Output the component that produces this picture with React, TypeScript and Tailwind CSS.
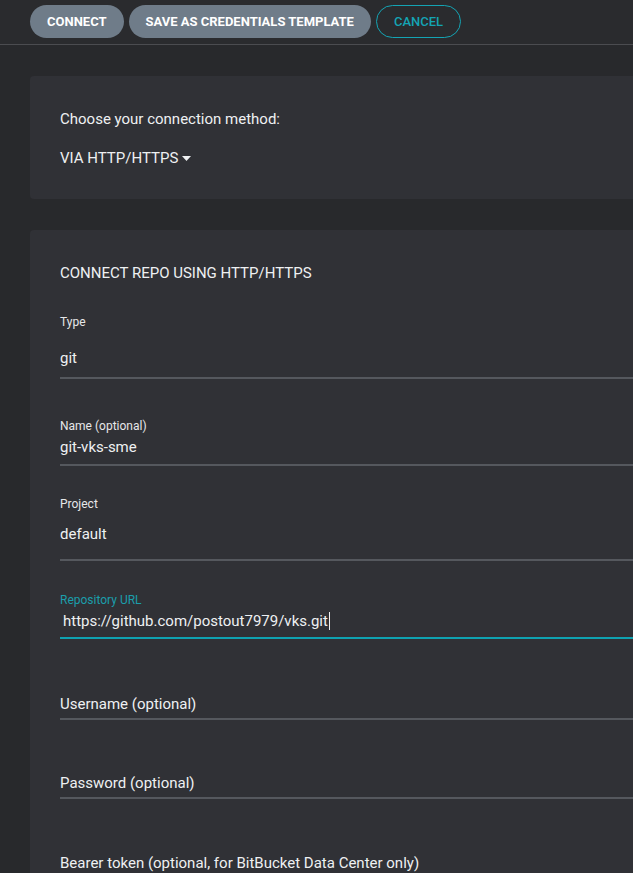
import { ReactNode } from "react";

const font = { fontFamily: "Roboto, 'Noto Sans', sans-serif" };

function Line({ active = false, className = "" }: { active?: boolean; className?: string }) {
  return (
    <div
      className={`h-[2px] w-full ${active ? "bg-[#0fa2b1]" : "bg-[#55585e]"} ${className}`}
    />
  );
}

function Label({ children, active = false }: { children: ReactNode; active?: boolean }) {
  return (
    <div
      className={`text-[12px] leading-4 ${active ? "text-[#1b9eab]" : "text-[#e6e7e9]"}`}
    >
      {children}
    </div>
  );
}

function Value({ children, className = "" }: { children: ReactNode; className?: string }) {
  return (
    <div className={`text-[15px] leading-5 text-[#eef0f2] ${className}`}>{children}</div>
  );
}

export default function App() {
  return (
    <div
      className="min-h-screen w-full overflow-hidden bg-[#28292c] text-[#eef0f2]"
      style={font}
    >
      {/* toolbar */}
      <div className="flex h-[45px] items-start gap-[5px] border-b border-[#4b4c50] bg-[#2a2b2e] pl-[30px] pt-[5px]">
        <button className="h-[33px] rounded-full bg-[#6f7c89] px-[17px] text-[13px] font-bold text-white">
          CONNECT
        </button>
        <button className="h-[33px] rounded-full bg-[#6f7c89] px-[17px] text-[13px] font-bold text-white">
          SAVE AS CREDENTIALS TEMPLATE
        </button>
        <button className="h-[33px] rounded-full border border-[#14a4b4] px-[17px] text-[13px] font-medium text-[#14a4b4]">
          CANCEL
        </button>
      </div>

      <div className="ml-[30px] mr-[-20px] pt-[31px]">
        {/* method card */}
        <div className="h-[123px] rounded-[4px] bg-[#303136] pl-[30px] pt-[33px]">
          <div className="text-[15px] leading-5">Choose your connection method:</div>
          <div className="mt-[19px] flex items-center gap-[4px] text-[15px] leading-5">
            VIA HTTP/HTTPS
            <svg width="9" height="5" viewBox="0 0 9 5" className="mt-[1px]">
              <path d="M0 0 L9 0 L4.5 5 Z" fill="#eef0f2" />
            </svg>
          </div>
        </div>

        {/* repo form card */}
        <div className="mt-[31px] min-h-[700px] rounded-[4px] bg-[#303136] pl-[30px] pt-[33px]">
          <div className="text-[15px] leading-5">CONNECT REPO USING HTTP/HTTPS</div>

          {/* Type */}
          <div className="mt-[31px]">
            <Label>Type</Label>
            <Value className="mt-[18px]">git</Value>
            <Line className="mt-[9px]" />
          </div>

          {/* Name */}
          <div className="mt-[39px]">
            <Label>Name (optional)</Label>
            <Value className="mt-[3px]">git-vks-sme</Value>
            <Line className="mt-[7px]" />
          </div>

          {/* Project */}
          <div className="mt-[30px]">
            <Label>Project</Label>
            <Value className="mt-[12px]">default</Value>
            <Line className="mt-[15px]" />
          </div>

          {/* Repository URL */}
          <div className="mt-[31px]">
            <Label active>Repository URL</Label>
            <Value className="mt-[3px] flex items-center pl-[3px]">
              https://github.com/postout7979/vks.git
              <span className="ml-[1px] inline-block h-[18px] w-[1px] bg-[#eef0f2]" />
            </Value>
            <Line active className="mt-[6px]" />
          </div>

          {/* Username */}
          <div className="mt-[55px]">
            <Value className="text-[#e3e5e8]">Username (optional)</Value>
            <Line className="mt-[4px]" />
          </div>

          {/* Password */}
          <div className="mt-[53px]">
            <Value className="text-[#e3e5e8]">Password (optional)</Value>
            <Line className="mt-[4px]" />
          </div>

          {/* Bearer token */}
          <div className="mt-[54px]">
            <Value className="text-[#e3e5e8]">
              Bearer token (optional, for BitBucket Data Center only)
            </Value>
            <Line className="mt-[4px]" />
          </div>
        </div>
      </div>
    </div>
  );
}
